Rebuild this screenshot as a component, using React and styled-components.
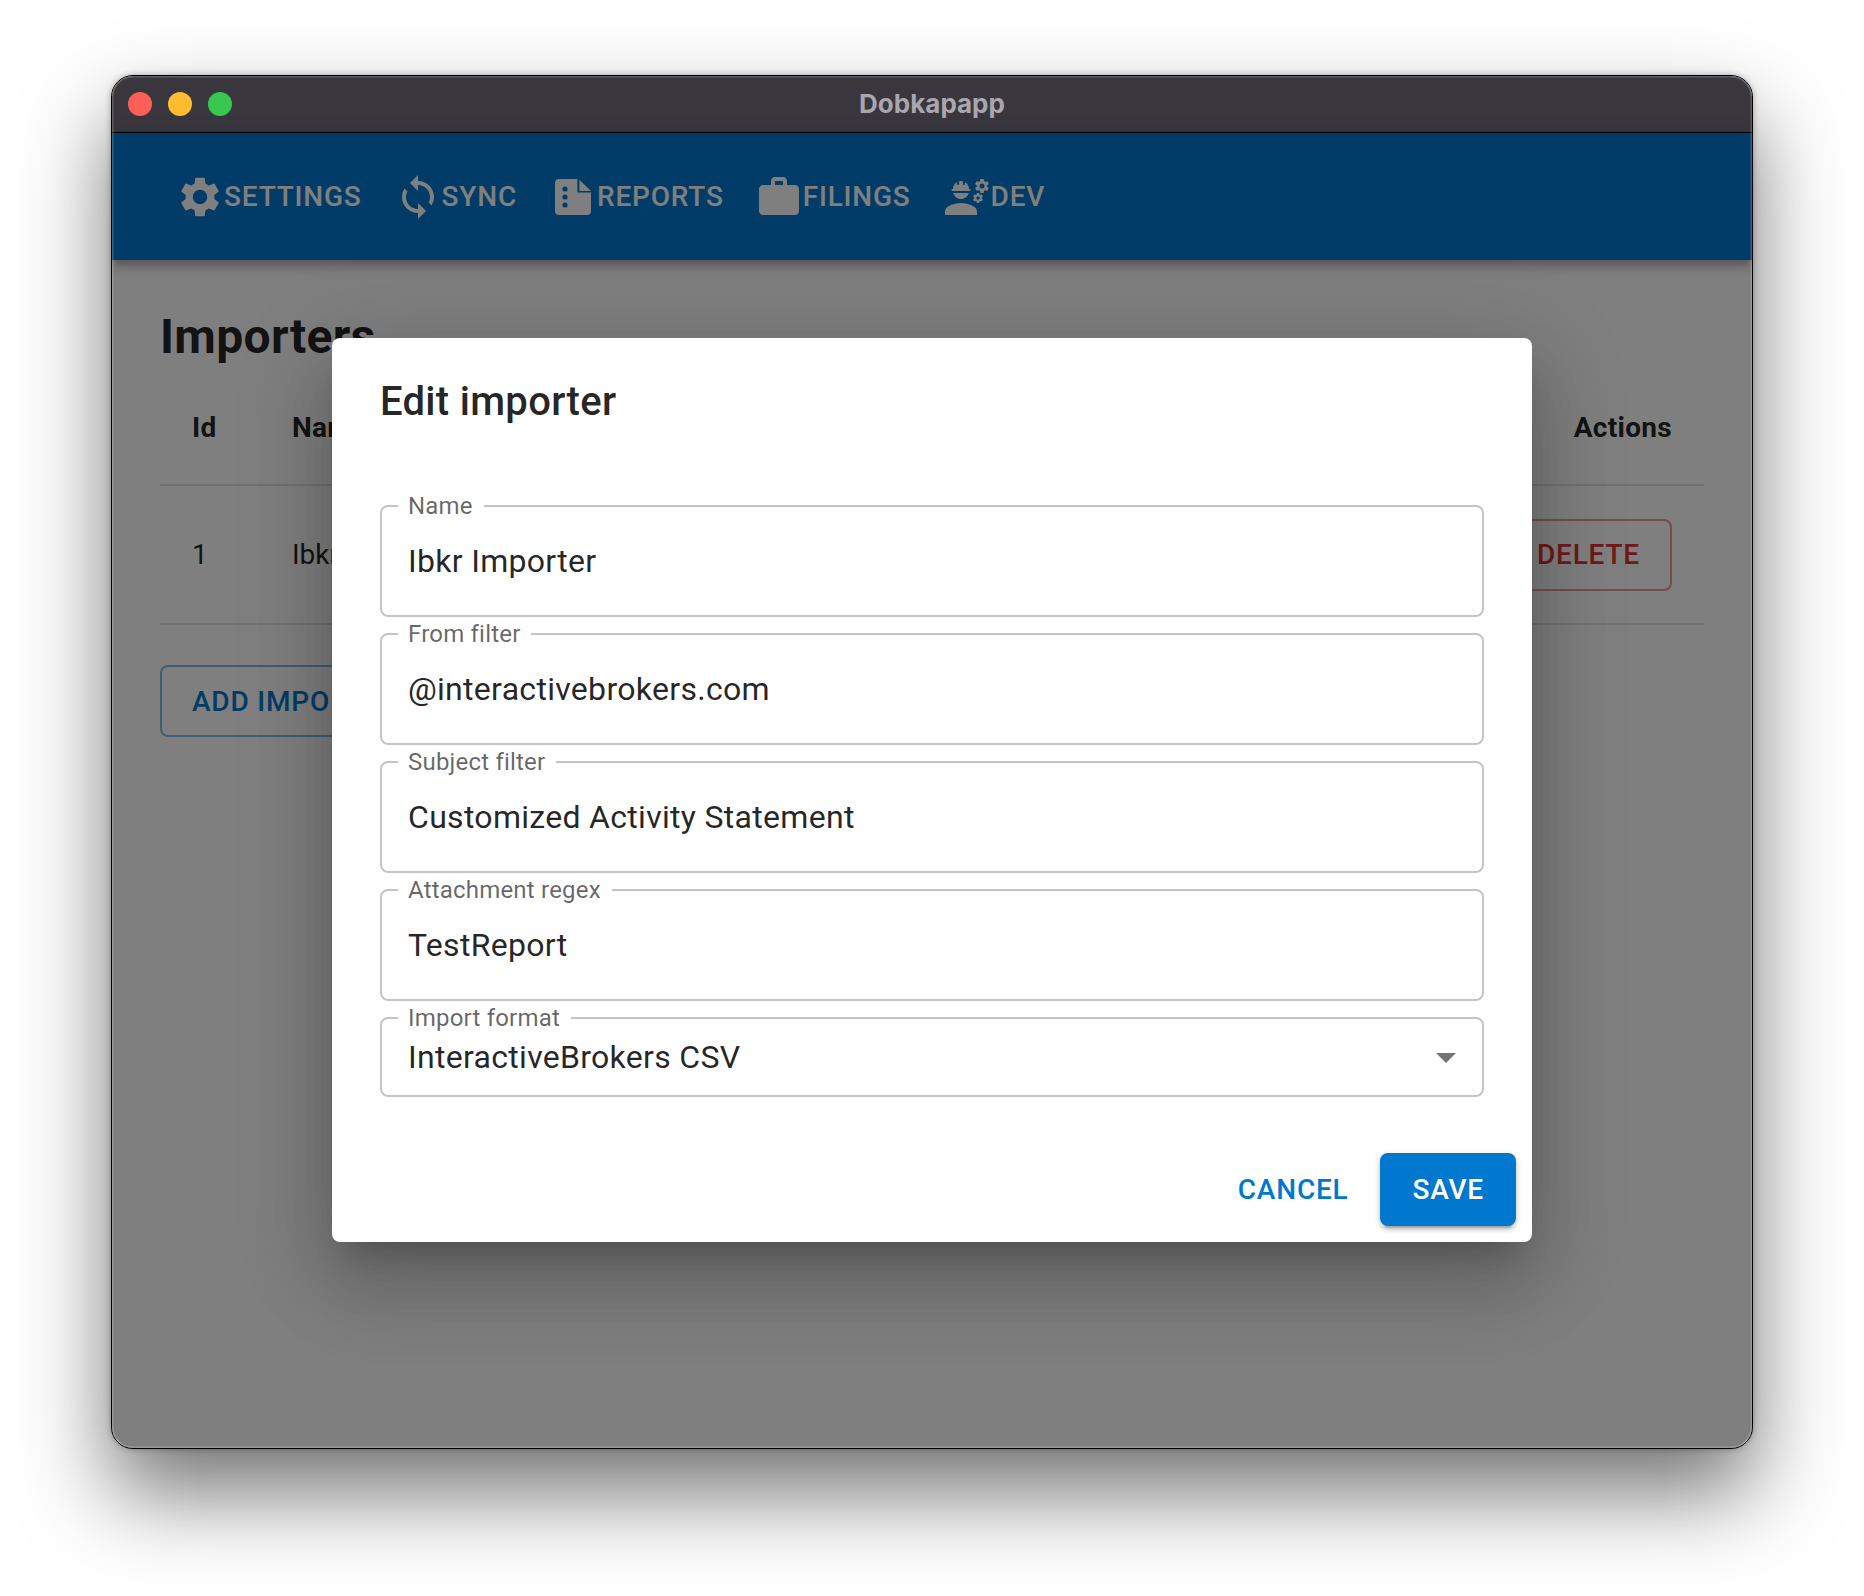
import React from "react";
import styled, { createGlobalStyle } from "styled-components";
import { MdSettings, MdSync, MdWork, MdEngineering, MdArrowDropDown } from "react-icons/md";

const Global = createGlobalStyle`
  html, body { margin: 0; padding: 0; background: #fff; }
  body { font-family: Roboto, "Liberation Sans", sans-serif; }
  * { box-sizing: border-box; }
`;

const Page = styled.div`
  width: 1864px;
  height: 1596px;
  padding: 75px 111px 0;
  overflow: hidden;
`;
const Window = styled.div`
  position: relative;
  width: 1642px;
  height: 1374px;
  display: flex;
  flex-direction: column;
  border: 1px solid #000;
  border-radius: 22px;
  overflow: hidden;
  background: #fff;
  box-shadow: 0 44px 88px rgba(0, 0, 0, 0.55), 0 0 6px rgba(0, 0, 0, 0.3);
  &::after {
    content: "";
    position: absolute;
    inset: 0;
    border-radius: 21px;
    box-shadow: inset 0 0 0 1.5px rgba(255, 255, 255, 0.2);
    pointer-events: none;
    z-index: 5;
  }
`;
const TitleBar = styled.div`
  position: relative;
  flex: 0 0 57px;
  display: flex;
  align-items: center;
  justify-content: center;
  padding-bottom: 2px;
  background: #39363d;
  border-bottom: 1px solid #000;
`;
const Lights = styled.div`
  position: absolute;
  left: 16px;
  top: 16px;
  display: flex;
  gap: 16px;
`;
const Light = styled.span`
  width: 24px;
  height: 24px;
  border-radius: 50%;
  background: ${(p) => p.$color};
`;
const AppTitle = styled.div`
  font-family: Inter, sans-serif;
  font-size: 26px;
  font-weight: 700;
  color: #aaa6ae;
`;
const Body = styled.div`
  position: relative;
  flex: 1;
  display: flex;
  flex-direction: column;
`;
const AppBar = styled.header`
  position: relative;
  flex: 0 0 127px;
  display: flex;
  align-items: center;
  padding: 0 48px;
  background: #0078cf;
  box-shadow: 0 4px 8px -2px rgba(0, 0, 0, 0.2), 0 8px 10px 0 rgba(0, 0, 0, 0.14), 0 2px 20px 0 rgba(0, 0, 0, 0.12);
`;
const NavItem = styled.div`
  display: flex;
  align-items: center;
  padding: 0 16px;
  margin-right: ${(p) => p.$nudge || 0}px;
  color: #fff;
  font-size: 28px;
  font-weight: 500;
  letter-spacing: 0.8px;
  line-height: 48px;
  text-transform: uppercase;
  svg {
    flex: 0 0 48px;
    width: 48px;
    height: 48px;
    fill: currentColor;
  }
`;
const Content = styled.main`
  flex: 1;
  padding: 0 48px;
`;
const Heading = styled.h1`
  margin: 45px 0 0;
  font-size: 48px;
  line-height: 64px;
  font-weight: 700;
  letter-spacing: 0.3px;
  color: rgba(0, 0, 0, 0.87);
`;
const TableRow = styled.div`
  display: grid;
  grid-template-columns: 132px 1fr auto;
  align-items: center;
  height: ${(p) => p.$h}px;
  padding-right: 32px;
  border-bottom: 2px solid #e0e0e0;
  font-size: 28px;
  color: rgba(0, 0, 0, 0.87);
`;
const HeadCell = styled.div`
  font-weight: 700;
  letter-spacing: 0.3px;
  padding-top: 2px;
  padding-left: ${(p) => (p.$first ? 32 : 0)}px;
`;
const Cell = styled.div`
  padding-left: ${(p) => (p.$first ? 32 : 0)}px;
`;
const OutlineButton = styled.button`
  display: inline-flex;
  align-items: center;
  height: 72px;
  padding: 0 30px;
  background: transparent;
  border: 2px solid ${(p) => p.$border};
  border-radius: 8px;
  color: ${(p) => p.$color};
  font: 500 28px Roboto, sans-serif;
  letter-spacing: 0.8px;
`;
const AddRow = styled.div`
  margin-top: 40px;
`;
const Backdrop = styled.div`
  position: absolute;
  inset: 0;
  display: flex;
  align-items: center;
  justify-content: center;
  padding-bottom: 2px;
  background: rgba(0, 0, 0, 0.5);
`;
const Dialog = styled.section`
  width: 1200px;
  height: 904px;
  background: #fff;
  border-radius: 8px;
  display: flex;
  flex-direction: column;
  box-shadow: 0 22px 30px -14px rgba(0, 0, 0, 0.2), 0 48px 76px 6px rgba(0, 0, 0, 0.14), 0 18px 92px 16px rgba(0, 0, 0, 0.12);
`;
const DialogTitle = styled.h2`
  margin: 0;
  padding: 32px 48px;
  font-size: 40px;
  line-height: 64px;
  font-weight: 500;
  letter-spacing: 0.3px;
  color: rgba(0, 0, 0, 0.87);
`;
const Fields = styled.div`
  flex: 1;
  display: flex;
  flex-direction: column;
  gap: 5px;
  padding: 28px 48px 0;
`;
const Field = styled.fieldset`
  margin: 0;
  padding: 0 26px;
  height: ${(p) => (p.$select ? 91 : 123)}px;
  border: 2px solid #c4c4c4;
  border-radius: 8px;
  min-width: 0;
`;
const Legend = styled.legend`
  margin-left: -10px;
  padding: 0 11px 0 10px;
  font-size: 24px;
  line-height: 24px;
  letter-spacing: 0.2px;
  color: rgba(0, 0, 0, 0.6);
`;
const Value = styled.div`
  display: flex;
  align-items: center;
  justify-content: space-between;
  line-height: ${(p) => (p.$select ? 54 : 87)}px;
  height: ${(p) => (p.$select ? 54 : 87)}px;
  font-size: 32px;
  letter-spacing: 0.3px;
  color: rgba(0, 0, 0, 0.87);
  svg {
    width: 48px;
    height: 48px;
    margin-right: -14px;
    fill: #757575;
  }
`;
const Actions = styled.div`
  display: flex;
  justify-content: flex-end;
  align-items: center;
  gap: 15px;
  padding: 16px;
`;
const TextButton = styled.button`
  height: 73px;
  padding: 0 16px;
  background: transparent;
  border: 0;
  color: #0078cf;
  font: 500 28px Roboto, sans-serif;
  letter-spacing: 0.8px;
`;
const SaveButton = styled.button`
  height: 73px;
  padding: 0 32px 0 33px;
  background: #0078cf;
  border: 0;
  border-radius: 8px;
  color: #fff;
  font: 500 28px Roboto, sans-serif;
  letter-spacing: 0.8px;
  box-shadow: 0 6px 2px -4px rgba(0, 0, 0, 0.2), 0 4px 4px 0 rgba(0, 0, 0, 0.14), 0 2px 10px 0 rgba(0, 0, 0, 0.12);
`;

const ReportIcon = () => (
  <svg viewBox="0 0 24 24">
    <path
      fillRule="evenodd"
      d="M3 5a2 2 0 0 1 2-2h9.2v6.8H21V19a2 2 0 0 1-2 2H5a2 2 0 0 1-2-2zM8 6.7a1.3 1.3 0 1 0 0 2.6 1.3 1.3 0 0 0 0-2.6zM8 10.7a1.3 1.3 0 1 0 0 2.6 1.3 1.3 0 0 0 0-2.6zM8 14.7a1.3 1.3 0 1 0 0 2.6 1.3 1.3 0 0 0 0-2.6z"
    />
    <path d="M15.2 3.4 21 9h-5.8z" />
  </svg>
);

const nav = [
  ["Settings", <MdSettings key="a" />, 0],
  ["Sync", <MdSync key="b" />, 0],
  ["Reports", <ReportIcon key="c" />, -1],
  ["Filings", <MdWork key="d" />, 0],
  ["Dev", <MdEngineering key="e" />, 0],
];
const fields = [
  ["Name", "Ibkr Importer"],
  ["From filter", "@interactivebrokers.com"],
  ["Subject filter", "Customized Activity Statement"],
  ["Attachment regex", "TestReport"],
];

export default function App() {
  return (
    <Page>
      <Global />
      <Window>
        <TitleBar>
          <Lights>
            <Light $color="#ff5f57" />
            <Light $color="#febc2e" />
            <Light $color="#38c84f" />
          </Lights>
          <AppTitle>Dobkapapp</AppTitle>
        </TitleBar>
        <Body>
          <AppBar>
            {nav.map(([label, icon, nudge]) => (
              <NavItem key={label} $nudge={nudge}>
                {icon}
                {label}
              </NavItem>
            ))}
          </AppBar>
          <Content>
            <Heading>Importers</Heading>
            <TableRow $h={117}>
              <HeadCell $first>Id</HeadCell>
              <HeadCell>Name</HeadCell>
              <HeadCell>Actions</HeadCell>
            </TableRow>
            <TableRow $h={139}>
              <Cell $first>1</Cell>
              <Cell>Ibkr Importer</Cell>
              <OutlineButton $color="#e03131" $border="rgba(224,49,49,0.5)">DELETE</OutlineButton>
            </TableRow>
            <AddRow>
              <OutlineButton $color="#0078cf" $border="rgba(0,120,207,0.5)">ADD IMPORTER</OutlineButton>
            </AddRow>
          </Content>
          <Backdrop>
            <Dialog>
              <DialogTitle>Edit importer</DialogTitle>
              <Fields>
                {fields.map(([label, value]) => (
                  <Field key={label}>
                    <Legend>{label}</Legend>
                    <Value>{value}</Value>
                  </Field>
                ))}
                <Field $select>
                  <Legend>Import format</Legend>
                  <Value $select>
                    InteractiveBrokers CSV
                    <MdArrowDropDown />
                  </Value>
                </Field>
              </Fields>
              <Actions>
                <TextButton>CANCEL</TextButton>
                <SaveButton>SAVE</SaveButton>
              </Actions>
            </Dialog>
          </Backdrop>
        </Body>
      </Window>
    </Page>
  );
}
